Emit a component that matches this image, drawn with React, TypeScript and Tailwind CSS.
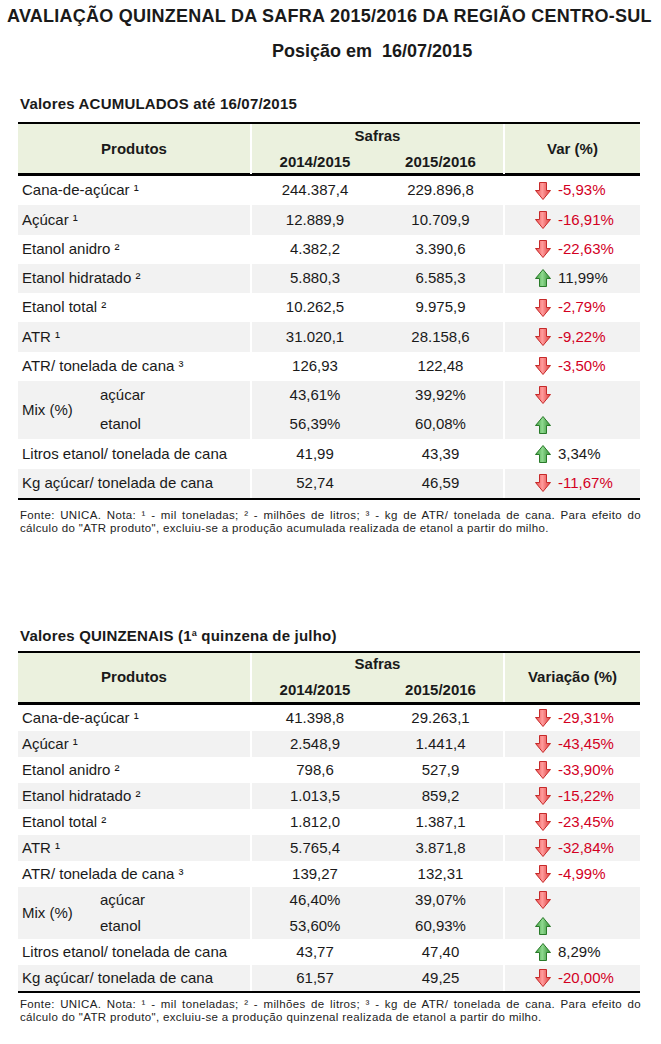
import React from "react";

type Row =
  | { kind: "row"; label: string; a: string; b: string; dir: "up" | "down"; v: string }
  | { kind: "mix"; a1: string; b1: string; d1: "up" | "down"; a2: string; b2: string; d2: "up" | "down" };

const table1: Row[] = [
  { kind: "row", label: "Cana-de-açúcar ¹", a: "244.387,4", b: "229.896,8", dir: "down", v: "-5,93%" },
  { kind: "row", label: "Açúcar ¹", a: "12.889,9", b: "10.709,9", dir: "down", v: "-16,91%" },
  { kind: "row", label: "Etanol anidro ²", a: "4.382,2", b: "3.390,6", dir: "down", v: "-22,63%" },
  { kind: "row", label: "Etanol hidratado ²", a: "5.880,3", b: "6.585,3", dir: "up", v: "11,99%" },
  { kind: "row", label: "Etanol total ²", a: "10.262,5", b: "9.975,9", dir: "down", v: "-2,79%" },
  { kind: "row", label: "ATR ¹", a: "31.020,1", b: "28.158,6", dir: "down", v: "-9,22%" },
  { kind: "row", label: "ATR/ tonelada de cana ³", a: "126,93", b: "122,48", dir: "down", v: "-3,50%" },
  { kind: "mix", a1: "43,61%", b1: "39,92%", d1: "down", a2: "56,39%", b2: "60,08%", d2: "up" },
  { kind: "row", label: "Litros etanol/ tonelada de cana", a: "41,99", b: "43,39", dir: "up", v: "3,34%" },
  { kind: "row", label: "Kg açúcar/ tonelada de cana", a: "52,74", b: "46,59", dir: "down", v: "-11,67%" },
];

const table2: Row[] = [
  { kind: "row", label: "Cana-de-açúcar ¹", a: "41.398,8", b: "29.263,1", dir: "down", v: "-29,31%" },
  { kind: "row", label: "Açúcar ¹", a: "2.548,9", b: "1.441,4", dir: "down", v: "-43,45%" },
  { kind: "row", label: "Etanol anidro ²", a: "798,6", b: "527,9", dir: "down", v: "-33,90%" },
  { kind: "row", label: "Etanol hidratado ²", a: "1.013,5", b: "859,2", dir: "down", v: "-15,22%" },
  { kind: "row", label: "Etanol total ²", a: "1.812,0", b: "1.387,1", dir: "down", v: "-23,45%" },
  { kind: "row", label: "ATR ¹", a: "5.765,4", b: "3.871,8", dir: "down", v: "-32,84%" },
  { kind: "row", label: "ATR/ tonelada de cana ³", a: "139,27", b: "132,31", dir: "down", v: "-4,99%" },
  { kind: "mix", a1: "46,40%", b1: "39,07%", d1: "down", a2: "53,60%", b2: "60,93%", d2: "up" },
  { kind: "row", label: "Litros etanol/ tonelada de cana", a: "43,77", b: "47,40", dir: "up", v: "8,29%" },
  { kind: "row", label: "Kg açúcar/ tonelada de cana", a: "61,57", b: "49,25", dir: "down", v: "-20,00%" },
];

function Arrow({ dir }: { dir: "up" | "down" }) {
  if (dir === "down") {
    return (
      <svg width="16" height="18" viewBox="0 0 16 18" className="shrink-0">
        <defs>
          <linearGradient id="gdown" x1="0" x2="1" y1="0" y2="0">
            <stop offset="0" stopColor="#e84a4a" />
            <stop offset="0.45" stopColor="#ff9c9c" />
            <stop offset="1" stopColor="#dc3a3a" />
          </linearGradient>
        </defs>
        <path d="M4.5 0.5 H11.5 V8.5 H15.5 L8 17.5 L0.5 8.5 H4.5 Z" fill="url(#gdown)" stroke="#c62a2a" strokeWidth="1" strokeLinejoin="round" />
      </svg>
    );
  }
  return (
    <svg width="16" height="18" viewBox="0 0 16 18" className="shrink-0">
      <defs>
        <linearGradient id="gup" x1="0" x2="1" y1="0" y2="0">
          <stop offset="0" stopColor="#3d9e3d" />
          <stop offset="0.45" stopColor="#8fd98f" />
          <stop offset="1" stopColor="#2f8a2f" />
        </linearGradient>
      </defs>
      <path d="M4.5 17.5 H11.5 V9.5 H15.5 L8 0.5 L0.5 9.5 H4.5 Z" fill="url(#gup)" stroke="#2a7a2a" strokeWidth="1" strokeLinejoin="round" />
    </svg>
  );
}

const cols = "grid grid-cols-[232px_128px_125px_137px]";

function DataTable({ rows, varLabel, compact }: { rows: Row[]; varLabel: string; compact?: boolean }) {
  const rh = compact ? "h-[26px]" : "h-[29.25px]";
  const mh = compact ? "h-[52px]" : "h-[58.5px]";
  return (
    <div className="w-[622px] ml-[18px] border-t-2 border-black border-b-2">
      <div className={`${cols} bg-[#ebf1de] border-b-[3px] border-black font-bold text-[15px] h-[52px]`}>
        <div className="flex items-center justify-center">Produtos</div>
        <div className="col-span-2 border-l-2 border-white flex flex-col">
          <div className={`flex items-center justify-center ${compact ? "h-[22px]" : "h-[24px]"}`}>Safras</div>
          <div className={`flex-1 grid grid-cols-[126px_125px] ${compact ? "pt-[4px]" : "pt-[3px]"}`}>
            <div className="flex items-center justify-center">2014/2015</div>
            <div className="flex items-center justify-center">2015/2016</div>
          </div>
        </div>
        <div className="border-l-2 border-white flex items-center justify-center">{varLabel}</div>
      </div>
      {rows.map((r, i) => {
        const bg = i % 2 === 1 ? "bg-[#f2f2f2]" : "bg-white";
        if (r.kind === "mix") {
          return (
            <div key={i} className={`${cols} ${bg} ${mh} text-[15px]`}>
              <div className="flex items-center pl-[4px]">
                <div className="w-[78px]">Mix (%)</div>
                <div className="flex flex-col h-full">
                  <div className="flex-1 flex items-center">açúcar</div>
                  <div className="flex-1 flex items-center">etanol</div>
                </div>
              </div>
              <div className="border-l-2 border-white flex flex-col">
                <div className="flex-1 flex items-center justify-center">{r.a1}</div>
                <div className="flex-1 flex items-center justify-center">{r.a2}</div>
              </div>
              <div className="flex flex-col">
                <div className="flex-1 flex items-center justify-center">{r.b1}</div>
                <div className="flex-1 flex items-center justify-center">{r.b2}</div>
              </div>
              <div className="border-l-2 border-white flex flex-col pl-[30px]">
                <div className="flex-1 flex items-center"><Arrow dir={r.d1} /></div>
                <div className="flex-1 flex items-center"><Arrow dir={r.d2} /></div>
              </div>
            </div>
          );
        }
        return (
          <div key={i} className={`${cols} ${bg} ${rh} text-[15px]`}>
            <div className="flex items-center pl-[4px] whitespace-nowrap">{r.label}</div>
            <div className="border-l-2 border-white flex items-center justify-center">{r.a}</div>
            <div className="flex items-center justify-center">{r.b}</div>
            <div className="border-l-2 border-white flex items-center pl-[30px] gap-[7px]">
              <Arrow dir={r.dir} />
              <span className={r.dir === "down" ? "text-[#d3001f]" : "text-[#1a1a1a]"}>{r.v}</span>
            </div>
          </div>
        );
      })}
    </div>
  );
}

function Footnote({ word, className }: { word: string; className: string }) {
  return (
    <div className={`mx-[20px] text-[11.5px] leading-[13px] tracking-[0.35px] text-[#222] ${className}`}>
      <p className="text-justify [text-align-last:justify]">
        Fonte: UNICA. Nota: ¹ - mil toneladas; ² - milhões de litros; ³ - kg de ATR/ tonelada de cana. Para efeito do
      </p>
      <p>cálculo do "ATR produto", excluiu-se a produção {word} realizada de etanol a partir do milho.</p>
    </div>
  );
}

export default function App() {
  return (
    <div className="w-[661px] h-[1044px] bg-white text-[#1a1a1a] font-['Liberation_Sans',Arial,sans-serif] overflow-hidden">
      <h1 className="pl-[7px] pt-[6px] text-[18px] font-bold leading-[20px] tracking-[0.25px] whitespace-nowrap">
        AVALIAÇÃO QUINZENAL DA SAFRA 2015/2016 DA REGIÃO CENTRO-SUL
      </h1>
      <p className="pl-[272px] mt-[15px] text-[18px] font-bold leading-[20px]">Posição em&nbsp; 16/07/2015</p>

      <h2 className="pl-[20px] mt-[34px] mb-[9px] text-[15px] font-bold leading-[18px] tracking-[0.2px]">Valores ACUMULADOS até 16/07/2015</h2>
      <DataTable rows={table1} varLabel="Var (%)" />
      <Footnote word="acumulada" className="mt-[9px]" />

      <h2 className="pl-[20px] mt-[92px] mb-[4px] text-[15px] font-bold leading-[18px] tracking-[0.2px]">
        Valores QUINZENAIS (1<span className="relative -top-[5px] text-[9px]">a</span> quinzena de julho)
      </h2>
      <DataTable rows={table2} varLabel="Variação (%)" compact />
      <Footnote word="quinzenal" className="mt-[5px]" />
    </div>
  );
}
